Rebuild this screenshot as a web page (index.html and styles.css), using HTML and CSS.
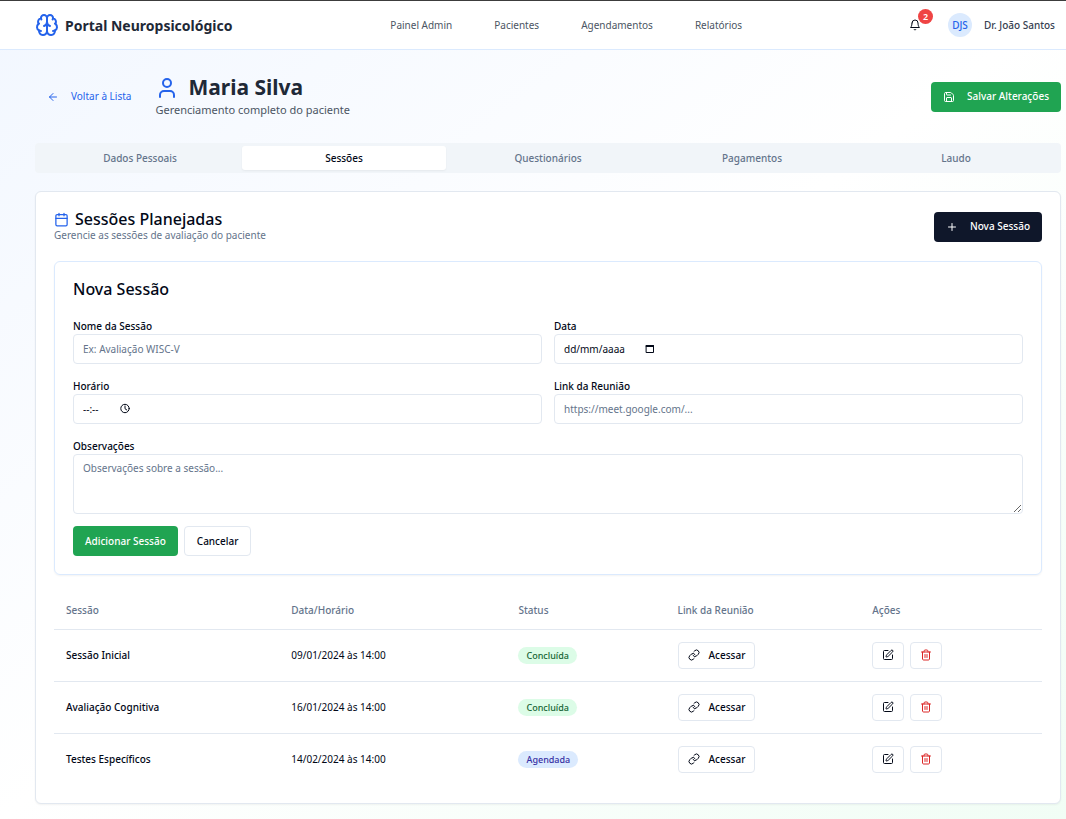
FILE: index.html
```html
<!DOCTYPE html>
<html lang="pt-BR">
<head>
<meta charset="utf-8">
<meta name="viewport" content="width=device-width, initial-scale=1">
<title>Portal Neuropsicológico</title>
<link rel="stylesheet" href="styles.css">
</head>
<body>
<svg class="sprite" aria-hidden="true">
  <symbol id="i-brain" viewBox="0 0 24 24"><path d="M12 5a3 3 0 1 0-5.997.125 4 4 0 0 0-2.526 5.77 4 4 0 0 0 .556 6.588A4 4 0 1 0 12 18Z"/><path d="M12 5a3 3 0 1 1 5.997.125 4 4 0 0 1 2.526 5.77 4 4 0 0 1-.556 6.588A4 4 0 1 1 12 18Z"/><path d="M15 13a4.5 4.5 0 0 1-3-4 4.500 4.500 0 0 1-3 4"/><path d="M17.599 6.500a3 3 0 0 0 .399-1.375M6.003 5.125A3 3 0 0 0 6.401 6.500M3.477 10.896a4 4 0 0 1 .585-.396M19.938 10.500a4 4 0 0 1 .585.396M6 18a4 4 0 0 1-1.967-.516M19.967 17.484A4 4 0 0 1 18 18"/></symbol>
  <symbol id="i-bell" viewBox="0 0 24 24"><path d="M6 8a6 6 0 0 1 12 0c0 7 3 9 3 9H3s3-2 3-9M10.300 21a1.940 1.940 0 0 0 3.400 0"/></symbol>
  <symbol id="i-back" viewBox="0 0 24 24"><path d="m12 19-7-7 7-7M19 12H5"/></symbol>
  <symbol id="i-user" viewBox="0 0 24 24"><path d="M19 21v-2a4 4 0 0 0-4-4H9a4 4 0 0 0-4 4v2"/><circle cx="12" cy="7" r="4"/></symbol>
  <symbol id="i-save" viewBox="0 0 24 24"><path d="M15.200 3a2 2 0 0 1 1.400.6l3.800 3.800a2 2 0 0 1 .6 1.400V19a2 2 0 0 1-2 2H5a2 2 0 0 1-2-2V5a2 2 0 0 1 2-2zM17 21v-7a1 1 0 0 0-1-1H8a1 1 0 0 0-1 1v7M7 3v4a1 1 0 0 0 1 1h7"/></symbol>
  <symbol id="i-calendar" viewBox="0 0 24 24"><path d="M8 2v4M16 2v4M3 10h18"/><rect x="3" y="4" width="18" height="18" rx="2"/></symbol>
  <symbol id="i-plus" viewBox="0 0 24 24"><path d="M5 12h14M12 5v14"/></symbol>
  <symbol id="i-link" viewBox="0 0 24 24"><path d="M10 13a5 5 0 0 0 7.540.54l3-3a5 5 0 0 0-7.070-7.070l-1.720 1.710"/><path d="M14 11a5 5 0 0 0-7.540-.54l-3 3a5 5 0 0 0 7.070 7.070l1.710-1.710"/></symbol>
  <symbol id="i-edit" viewBox="0 0 24 24"><path d="M12 3H5a2 2 0 0 0-2 2v14a2 2 0 0 0 2 2h14a2 2 0 0 0 2-2v-7"/><path d="M18.375 2.625a1 1 0 0 1 3 3l-9.013 9.014a2 2 0 0 1-.853.505l-2.873.84a.5.5 0 0 1-.62-.62l.84-2.873a2 2 0 0 1 .506-.852z"/></symbol>
  <symbol id="i-trash" viewBox="0 0 24 24"><path d="M3 6h18M19 6v14c0 1-1 2-2 2H7c-1 0-2-1-2-2V6M8 6V4c0-1 1-2 2-2h4c1 0 2 1 2 2v2M10 11v6M14 11v6"/></symbol>
  <symbol id="i-date" viewBox="0 0 12 12"><path d="M2.500 2.500h7v7h-7z"/><path d="M2.500 2.500h7v1h-7z" fill="currentColor"/></symbol>
  <symbol id="i-clock" viewBox="0 0 12 12"><circle cx="6" cy="5.500" r="4.200"/><path d="M6 3v2.700l1.800 1.300"/></symbol>
</svg>

<header class="topbar">
  <a class="brand" href="#"><svg class="icon icon-24"><use href="#i-brain"/></svg><span>Portal Neuropsicológico</span></a>
  <nav class="nav">
    <a href="#">Painel Admin</a>
    <a href="#">Pacientes</a>
    <a href="#">Agendamentos</a>
    <a href="#">Relatórios</a>
  </nav>
  <div class="account">
    <button class="bell" type="button" aria-label="Notificações"><svg class="icon icon-12"><use href="#i-bell"/></svg><span class="count">2</span></button>
    <div class="profile"><span class="avatar">DJS</span><span>Dr. João Santos</span></div>
  </div>
</header>

<main class="page">
  <div class="page-head">
    <a class="back" href="#"><svg class="icon icon-12"><use href="#i-back"/></svg>Voltar à Lista</a>
    <div class="patient">
      <h1><svg class="icon icon-24"><use href="#i-user"/></svg>Maria Silva</h1>
      <p>Gerenciamento completo do paciente</p>
    </div>
    <button class="btn btn-green" type="button"><svg class="icon icon-12"><use href="#i-save"/></svg>Salvar Alterações</button>
  </div>

  <div class="tabs" role="tablist">
    <button type="button" role="tab">Dados Pessoais</button>
    <button type="button" role="tab" class="active" aria-selected="true">Sessões</button>
    <button type="button" role="tab">Questionários</button>
    <button type="button" role="tab">Pagamentos</button>
    <button type="button" role="tab">Laudo</button>
  </div>

  <section class="card">
    <div class="card-head">
      <div>
        <h2><svg class="icon icon-15"><use href="#i-calendar"/></svg>Sessões Planejadas</h2>
        <p>Gerencie as sessões de avaliação do paciente</p>
      </div>
      <button class="btn btn-dark" type="button"><svg class="icon icon-12"><use href="#i-plus"/></svg>Nova Sessão</button>
    </div>

    <form class="session-form">
      <h3>Nova Sessão</h3>
      <div class="fields">
        <div class="field">
          <label for="nome">Nome da Sessão</label>
          <input id="nome" type="text" placeholder="Ex: Avaliação WISC-V">
        </div>
        <div class="field">
          <label for="data">Data</label>
          <div class="picker">
            <input id="data" type="text" inputmode="numeric" placeholder="dd/mm/aaaa" size="9">
            <button type="button" aria-label="Abrir calendário"><svg class="icon icon-12"><use href="#i-date"/></svg></button>
          </div>
        </div>
        <div class="field">
          <label for="horario">Horário</label>
          <div class="picker picker-time">
            <input id="horario" type="text" inputmode="numeric" placeholder="--:--" size="4">
            <button type="button" aria-label="Escolher horário"><svg class="icon icon-12"><use href="#i-clock"/></svg></button>
          </div>
        </div>
        <div class="field">
          <label for="link">Link da Reunião</label>
          <input id="link" type="url" placeholder="https://meet.google.com/...">
        </div>
        <div class="field field-wide">
          <label for="obs">Observações</label>
          <textarea id="obs" placeholder="Observações sobre a sessão..."></textarea>
        </div>
      </div>
      <div class="form-actions">
        <button class="btn btn-green" type="submit">Adicionar Sessão</button>
        <button class="btn btn-outline" type="button">Cancelar</button>
      </div>
    </form>

    <table class="sessions">
      <colgroup><col class="c-name"><col class="c-date"><col class="c-status"><col class="c-link"><col class="c-actions"></colgroup>
      <thead>
        <tr><th>Sessão</th><th>Data/Horário</th><th>Status</th><th>Link da Reunião</th><th>Ações</th></tr>
      </thead>
      <tbody>
        <tr>
          <td class="name">Sessão Inicial</td><td>09/01/2024 às 14:00</td><td><span class="badge done">Concluída</span></td>
          <td><a class="btn btn-outline btn-small" href="#"><svg class="icon icon-12"><use href="#i-link"/></svg>Acessar</a></td>
          <td><div class="row-actions"><button class="btn btn-outline btn-icon" type="button" aria-label="Editar"><svg class="icon icon-12"><use href="#i-edit"/></svg></button><button class="btn btn-outline btn-icon danger" type="button" aria-label="Excluir"><svg class="icon icon-12"><use href="#i-trash"/></svg></button></div></td>
        </tr>
        <tr>
          <td class="name">Avaliação Cognitiva</td><td>16/01/2024 às 14:00</td><td><span class="badge done">Concluída</span></td>
          <td><a class="btn btn-outline btn-small" href="#"><svg class="icon icon-12"><use href="#i-link"/></svg>Acessar</a></td>
          <td><div class="row-actions"><button class="btn btn-outline btn-icon" type="button" aria-label="Editar"><svg class="icon icon-12"><use href="#i-edit"/></svg></button><button class="btn btn-outline btn-icon danger" type="button" aria-label="Excluir"><svg class="icon icon-12"><use href="#i-trash"/></svg></button></div></td>
        </tr>
        <tr>
          <td class="name">Testes Específicos</td><td>14/02/2024 às 14:00</td><td><span class="badge planned">Agendada</span></td>
          <td><a class="btn btn-outline btn-small" href="#"><svg class="icon icon-12"><use href="#i-link"/></svg>Acessar</a></td>
          <td><div class="row-actions"><button class="btn btn-outline btn-icon" type="button" aria-label="Editar"><svg class="icon icon-12"><use href="#i-edit"/></svg></button><button class="btn btn-outline btn-icon danger" type="button" aria-label="Excluir"><svg class="icon icon-12"><use href="#i-trash"/></svg></button></div></td>
        </tr>
      </tbody>
    </table>
  </section>
</main>
</body>
</html>
```
FILE: styles.css
```css
:root {
  --ink: #020817;
  --muted: #64748b;
  --line: #e2e8f0;
  --blue: #2563eb;
  --green: #20a452;
}

* { box-sizing: border-box; }

body {
  margin: 0;
  min-height: 100vh;
  background: linear-gradient(to bottom right, #f2f7ff, #ffffff, #f1fdf5);
  color: var(--ink);
  font: 10px/15px "Noto Sans", "Open Sans", sans-serif;
}

h1, h2, h3, p { margin: 0; }
a { color: inherit; text-decoration: none; }
button, input, textarea { font: inherit; color: inherit; }
button { cursor: pointer; }

.sprite { position: absolute; width: 0; height: 0; }

.icon {
  flex: none;
  fill: none;
  stroke: currentColor;
  stroke-width: 2;
  stroke-linecap: round;
  stroke-linejoin: round;
}
.icon-12 { width: 12px; height: 12px; }
.icon-15 { width: 15px; height: 15px; }
.icon-24 { width: 24px; height: 24px; }

/* Top bar */
.topbar {
  display: flex;
  align-items: center;
  justify-content: space-between;
  height: 50px;
  padding: 0 11px 0 35px;
  background: #fff;
  border-top: 1px solid #3c3c3c;
  border-bottom: 1px solid #dbeafe;
}
.brand {
  display: flex;
  align-items: center;
  gap: 6px;
  color: #1f2937;
  font-size: 14px;
  font-weight: 700;
}
.brand .icon { color: var(--blue); }
.nav { display: flex; gap: 42px; color: #4b5563; }
.account { display: flex; align-items: center; gap: 18px; }
.bell {
  position: relative;
  display: flex;
  padding: 9px;
  border: 0;
  background: none;
}
.count {
  position: absolute;
  top: -1px;
  right: -3px;
  width: 15px;
  height: 15px;
  border-radius: 50%;
  background: #ef4444;
  color: #fff;
  font-size: 9px;
  font-weight: 600;
  text-align: center;
}
.profile { display: flex; align-items: center; gap: 12px; color: #374151; font-weight: 500; }
.avatar {
  width: 24px;
  border-radius: 50%;
  background: #dbeafe;
  color: var(--blue);
  line-height: 24px;
  text-align: center;
}

/* Page heading */
.page { padding: 24px 5px 15px 35px; }
.page-head { display: flex; align-items: center; gap: 12px; }
.back {
  display: flex;
  align-items: center;
  gap: 12px;
  padding: 0 12px;
  color: var(--blue);
}
.patient { flex: 1; }
.patient h1 {
  display: flex;
  align-items: center;
  gap: 9px;
  color: #1f2937;
  font-size: 21px;
  font-weight: 700;
  line-height: 27px;
}
.patient h1 .icon { color: var(--blue); }
.patient p { color: #4b5563; font-size: 11px; line-height: 18px; }

/* Buttons */
.btn {
  display: inline-flex;
  align-items: center;
  justify-content: center;
  gap: 12px;
  height: 30px;
  padding: 0 12px;
  border: 0;
  border-radius: 4px;
  font-weight: 500;
  white-space: nowrap;
}
.btn-green { background: var(--green); color: #fff; }
.btn-dark { background: #0f172a; color: #fff; }
.btn-outline { border: 1px solid var(--line); background: #fff; }
.btn-small { gap: 9px; height: 27px; padding: 0 9px; }
.btn-icon { width: 32px; height: 27px; padding: 0; }
.danger { color: #dc2626; }

/* Tabs */
.tabs {
  display: grid;
  grid-template-columns: repeat(5, 1fr);
  margin: 24px 0 18px;
  padding: 3px;
  border-radius: 4px;
  background: #f1f5f9;
}
.tabs button {
  height: 24px;
  padding: 0;
  border: 0;
  border-radius: 3px;
  background: none;
  color: var(--muted);
  font-weight: 500;
}
.tabs .active {
  background: #fff;
  color: var(--ink);
  box-shadow: 0 1px 2px rgb(0 0 0 / 5%);
}

/* Session card */
.card {
  padding: 18px;
  border: 1px solid var(--line);
  border-radius: 6px;
  background: #fff;
  box-shadow: 0 1px 2px rgb(0 0 0 / 5%);
}
.card-head {
  display: flex;
  align-items: center;
  justify-content: space-between;
  margin-bottom: 18px;
}
.card-head h2 {
  display: flex;
  align-items: center;
  gap: 6px;
}
.card-head h2 .icon { color: var(--blue); }
.card-head p { color: var(--muted); }
h2, h3 { font-size: 16px; font-weight: 500; line-height: 18px; }

/* New session form */
.session-form {
  margin-bottom: 18px;
  padding: 18px;
  border: 1px solid #dbeafe;
  border-radius: 6px;
  box-shadow: 0 1px 2px rgb(0 0 0 / 5%);
}
.fields {
  display: grid;
  grid-template-columns: 1fr 1fr;
  gap: 12px;
  margin: 18px 0 12px;
}
.field { display: flex; flex-direction: column; }
.field-wide { grid-column: 1 / -1; }
.field label { padding-top: 2px; line-height: 16px; font-weight: 500; }
.field > input, .picker, textarea {
  width: 100%;
  height: 30px;
  padding: 0 9px;
  border: 1px solid var(--line);
  border-radius: 4px;
  background: #fff;
}
textarea { display: block; height: 60px; padding: 6px 9px; resize: vertical; }
::placeholder { color: var(--muted); opacity: 1; }
.picker { display: flex; align-items: center; gap: 12px; }
.picker input {
  width: 68px;
  padding: 0;
  border: 0;
  background: none;
}
.picker-time input { width: 24px; }
.picker input::placeholder { color: var(--ink); }
.picker button { display: flex; padding: 0; border: 0; background: none; }
.picker .icon { stroke-width: 1; }
.form-actions { display: flex; gap: 6px; }

/* Session list */
.sessions { width: 100%; border-collapse: collapse; table-layout: fixed; }
.c-name { width: 22.8%; }
.c-date { width: 23%; }
.c-status { width: 16.1%; }
.c-link { width: 19.7%; }
.c-actions { width: 18.4%; }
.sessions th, .sessions td { padding: 0 12px; text-align: left; vertical-align: middle; }
.sessions th { height: 36px; color: var(--muted); font-weight: 500; }
.sessions td { height: 52px; }
.sessions tr { border-bottom: 1px solid var(--line); }
.sessions tbody tr:last-child { border-bottom: 0; }
.sessions .name { font-weight: 500; }
.row-actions { display: flex; gap: 6px; }
.badge {
  display: inline-block;
  padding: 1px 8px;
  border-radius: 9px;
  font-size: 9px;
  font-weight: 500;
}
.done { background: #dcfce7; color: #166534; }
.planned { background: #dbeafe; color: #3730a3; }
```
